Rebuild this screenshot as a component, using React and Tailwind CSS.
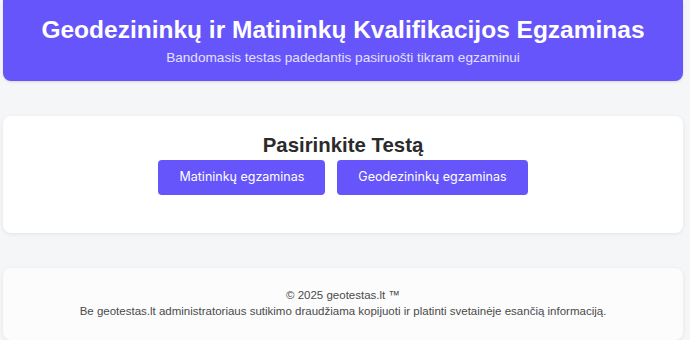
import React from 'react';

const App = () => {
  return (
    <div className="min-h-screen bg-[#f5f6f8] font-['Liberation_Sans',Arial,sans-serif] overflow-hidden">
      <div className="ml-[3px] w-[680px] flex flex-col">
        <header className="bg-[#6655fb] rounded-b-lg h-[81px] flex flex-col items-center pt-[15px] text-white shadow-sm">
          <h1 className="text-[24.5px] leading-[30px] font-bold">Geodezininkų ir Matininkų Kvalifikacijos Egzaminas</h1>
          <p className="text-[13.6px] leading-[18px] mt-[4px] text-[#e4e0ff]">Bandomasis testas padedantis pasiruošti tikram egzaminui</p>
        </header>

        <section className="mt-[35px] h-[117px] bg-white rounded-lg shadow-[0_1px_4px_rgba(0,0,0,0.08)] flex flex-col items-center pt-[16px]">
          <h2 className="text-[20.4px] leading-[26px] font-bold text-[#2b2b2b]">Pasirinkite Testą</h2>
          <div className="flex gap-3 mt-[2px]">
            <button className="h-[35px] px-[21px] rounded bg-[#6655fb] text-white text-[12.5px] font-['Inter',sans-serif]">Matininkų egzaminas</button>
            <button className="h-[35px] px-[21px] rounded bg-[#6655fb] text-white text-[12.5px] font-['Inter',sans-serif]">Geodezininkų egzaminas</button>
          </div>
        </section>

        <footer className="mt-[35px] h-[72px] bg-[#fcfcfc] rounded-lg shadow-[0_1px_4px_rgba(0,0,0,0.08)] flex flex-col items-center pt-[19px] text-[11.5px] leading-[16px] text-[#4a4a4a]">
          <p>© 2025 geotestas.lt ™</p>
          <p>Be geotestas.lt administratoriaus sutikimo draudžiama kopijuoti ir platinti svetainėje esančią informaciją.</p>
        </footer>
      </div>
    </div>
  );
};

export default App;
